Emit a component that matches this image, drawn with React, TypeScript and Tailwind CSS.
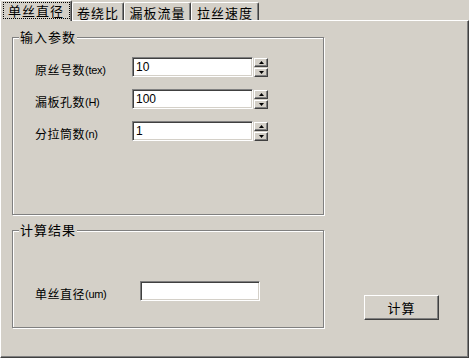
import React from "react";

const raised =
  "border-t border-l border-t-white border-l-white border-r border-b border-r-[#404040] border-b-[#404040] shadow-[inset_-1px_-1px_0_#808080]";
const sunken =
  "bg-white border-t border-l border-t-[#808080] border-l-[#808080] border-r border-b border-r-white border-b-white shadow-[inset_1px_1px_0_#404040,inset_-1px_-1px_0_#d4d0c8]";

function Tab({ label, active, w }: { label: string; active?: boolean; w: string }) {
  return (
    <div
      className={`${w} ${
        active ? "h-[21px] -mb-px relative z-10 bg-[#d4d0c8]" : "h-[18px]"
      } flex items-start justify-center border-t border-l border-white border-r border-r-[#404040] rounded-tl-[2px] rounded-tr-[2px] shadow-[inset_-1px_0_0_#808080]`}
    >
      {active ? (
        <div className="mt-[1px] w-[67px] h-[17px] border border-dotted border-black flex items-center justify-center text-[13px] tracking-[1px] leading-none">
          {label}
        </div>
      ) : (
        <div className="mt-[1px] h-[16px] flex items-center text-[13px] tracking-[1px] leading-none">{label}</div>
      )}
    </div>
  );
}

function Label({ cn, en, w }: { cn: string; en: string; w: string }) {
  return (
    <div className={`${w} flex items-center pt-[6px] text-[12px] leading-none whitespace-nowrap`}>
      <span className="tracking-[0.5px]">{cn}</span>
      <span className="font-['Liberation_Sans'] text-[11px] tracking-[-0.3px]">{en}</span>
    </div>
  );
}

function Tri({ up }: { up?: boolean }) {
  return (
    <svg width="5" height="3" viewBox="0 0 5 3">
      {up ? <polygon points="2.5,0 5,3 0,3" fill="#000" /> : <polygon points="0,0 5,0 2.5,3" fill="#000" />}
    </svg>
  );
}

function SpinRow({ cn, en, value }: { cn: string; en: string; value: string }) {
  return (
    <div className="flex items-center h-[20px]">
      <Label cn={cn} en={en} w="w-[97px]" />
      <div className={`${sunken} w-[121px] h-[20px] pl-[3px] flex items-center font-['Liberation_Sans'] text-[12px] leading-none`}>
        {value}
      </div>
      <div className="ml-[1px] flex flex-col gap-[1px] py-[0px]">
        <div className={`${raised} bg-[#d4d0c8] w-[14px] h-[9px] flex items-center justify-center`}>
          <Tri up />
        </div>
        <div className={`${raised} bg-[#d4d0c8] w-[14px] h-[9px] flex items-center justify-center`}>
          <Tri />
        </div>
      </div>
    </div>
  );
}

function Group({ title, h, children }: { title: string; h: string; children: React.ReactNode }) {
  return (
    <div
      className={`relative w-[312px] ${h} border border-[#808080] shadow-[inset_1px_1px_0_white,1px_1px_0_white]`}
    >
      <div className="absolute left-[6px] top-[-9px] px-[1px] bg-[#d4d0c8] text-[13px] tracking-[1px] leading-[16px]">
        {title}
      </div>
      {children}
    </div>
  );
}

export default function App() {
  return (
    <div className="w-[469px] h-[358px] bg-[#d4d0c8] overflow-hidden text-black font-['Noto_Sans_CJK_SC',sans-serif]">
      <div className="flex items-end h-[20px]">
        <Tab label="单丝直径" active w="w-[72px]" />
        <Tab label="卷绕比" w="w-[52px]" />
        <Tab label="漏板流量" w="w-[67px]" />
        <Tab label="拉丝速度" w="w-[68px]" />
      </div>
      <div className="h-[338px] border-t border-l border-white border-r border-b border-r-[#404040] border-b-[#404040] shadow-[inset_-1px_-1px_0_#808080] pl-[11px] pt-[16px]">
        <Group title="输入参数" h="h-[178px]">
          <div className="pt-[19px] pl-[22px] flex flex-col gap-[12px]">
            <SpinRow cn="原丝号数" en="(tex)" value="10" />
            <SpinRow cn="漏板孔数" en="(H)" value="100" />
            <SpinRow cn="分拉筒数" en="(n)" value="1" />
          </div>
        </Group>
        <div className="flex items-start mt-[15px]">
          <Group title="计算结果" h="h-[98px]">
            <div className="pt-[50px] pl-[22px] flex items-center h-[70px]">
              <Label cn="单丝直径" en="(um)" w="w-[105px]" />
              <div className={`${sunken} w-[120px] h-[20px]`} />
            </div>
          </Group>
          <button
            className={`${raised} bg-[#d4d0c8] ml-[40px] mt-[65px] w-[75px] h-[25px] flex items-center justify-center text-[13px] tracking-[1px] leading-none`}
          >
            计算
          </button>
        </div>
      </div>
    </div>
  );
}
